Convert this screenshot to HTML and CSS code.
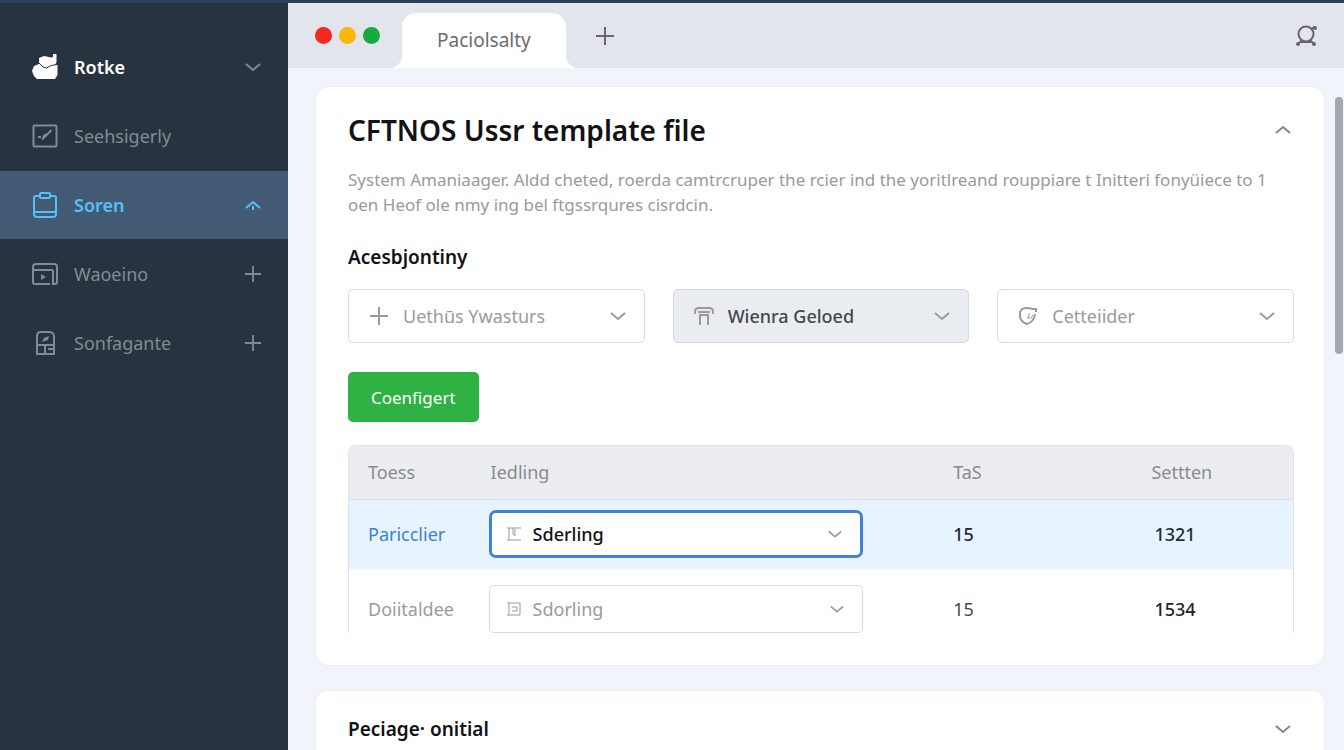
FILE: index.html
```html
<!DOCTYPE html>
<html lang="en">
<head>
<meta charset="utf-8">
<meta name="viewport" content="width=device-width, initial-scale=1">
<title>CFTNOS Ussr template file</title>
<link rel="stylesheet" href="styles.css">
</head>
<body>
<svg class="defs" aria-hidden="true">
  <symbol id="down" viewBox="0 0 18 12"><path d="M2 3l7 6 7-6"/></symbol>
  <symbol id="up" viewBox="0 0 18 12"><path d="M2 9l7-6 7 6"/></symbol>
  <symbol id="plus" viewBox="0 0 20 20"><path d="M10 1v18M1 10h18"/></symbol>
</svg>
<div class="app">
  <nav class="sidebar" aria-label="Main">
    <a class="nav-item brand" href="#">
      <svg class="nav-icon" viewBox="0 0 28 28"><path class="solid" d="M1 18L3 13L8 11V5L13 3L20 4.500L22 4V1H25.500V9L24 12H26.500V22L24 26H6L3 23Z"/><path class="cut" d="M8 10L12 14L15.500 15L20 12.500L26 11.500"/></svg>
      <span class="nav-label">Rotke</span>
      <svg class="chevron"><use href="#down"/></svg>
    </a>
    <a class="nav-item" href="#">
      <svg class="nav-icon" viewBox="0 0 28 28"><rect x="2.500" y="3.500" width="23" height="21" rx="1"/><path d="M11 17.500L20.500 8M7 15h3M12 15l3-3"/></svg>
      <span class="nav-label">Seehsigerly</span>
    </a>
    <a class="nav-item active" href="#" aria-current="page">
      <svg class="nav-icon" viewBox="0 0 28 28"><path d="M9 5H5Q3 5 3 7v16q0 3 3 3h16q3 0 3-3V7q0-2-2-2h-4M3 21h22"/><rect x="9" y="2" width="10" height="5" rx="1"/></svg>
      <span class="nav-label">Soren</span>
      <svg class="chevron"><use href="#up"/><path d="M9 7v4"/></svg>
    </a>
    <a class="nav-item" href="#">
      <svg class="nav-icon" viewBox="0 0 28 28"><path d="M19 24H4q-2 0-2-2V7q0-3 3-3h18q3 0 3 3v15q0 2-2 2h-2V10M2 10h20"/><path class="solid" d="M10 14l5 3-5 3z"/></svg>
      <span class="nav-label">Waoeino</span>
      <svg class="plus"><use href="#plus"/></svg>
    </a>
    <a class="nav-item" href="#">
      <svg class="nav-icon" viewBox="0 0 28 28"><path d="M6 25V7q0-4 4-4h8q5 0 5 5v17zM6 16h17M14 16v9M17 20h6"/><path class="solid" d="M11 13l2-4 5-2-1 4z"/></svg>
      <span class="nav-label">Sonfagante</span>
      <svg class="plus"><use href="#plus"/></svg>
    </a>
  </nav>
  <div class="window">
    <header class="tabbar">
      <div class="lights"><span class="light red"></span><span class="light yellow"></span><span class="light green"></span></div>
      <button class="tab" type="button">Paciolsalty</button>
      <button class="icon-button" type="button" aria-label="New tab"><svg class="plus"><use href="#plus"/></svg></button>
      <button class="icon-button account" type="button" aria-label="Account"><svg class="account-icon" viewBox="0 0 24 24"><circle cx="12" cy="10" r="7.500"/><path d="M17 5l4-2M8 16l-4 4M16 16l4 4M6 18h12"/><circle class="solid" cx="4" cy="20" r="2"/><circle class="solid" cx="20" cy="20" r="2"/><circle class="solid" cx="21" cy="4" r="2"/></svg></button>
    </header>
    <main class="content">
      <section class="card">
        <div class="card-head">
          <h1 class="title">CFTNOS Ussr template file</h1>
          <button class="icon-button" type="button" aria-label="Collapse"><svg class="chevron"><use href="#up"/></svg></button>
        </div>
        <p class="description">System Amaniaager. Aldd cheted, roerda camtrcruper the rcier ind the yoritlreand rouppiare t Initteri fonyüiece to 1 oen Heof ole nmy ing bel ftgssrqures cisrdcin.</p>
        <h2 class="subtitle" id="filters">Acesbjontiny</h2>
        <div class="filters" role="group" aria-labelledby="filters">
          <div class="field">
            <svg class="field-icon" viewBox="0 0 20 20"><path d="M10 1v18M1 10h18"/></svg>
            <select class="select" aria-label="First filter"><option>Uethūs Ywasturs</option></select>
            <svg class="chevron"><use href="#down"/></svg>
          </div>
          <div class="field filled">
            <svg class="field-icon" viewBox="0 0 20 20"><path d="M1 8V6q0-4 4-4h10q4 0 4 4v2M4 6h12M6 19V9h8v10"/></svg>
            <select class="select" aria-label="Second filter"><option>Wienra Geloed</option></select>
            <svg class="chevron"><use href="#down"/></svg>
          </div>
          <div class="field">
            <svg class="field-icon" viewBox="0 0 20 20"><path d="M14 3Q9 1 4 3L2 6v5q1 5 7 7 7-2 8-10M14 3h4v3"/><path class="thin" d="M11 7v3l-2 2h4l2-3"/></svg>
            <select class="select" aria-label="Third filter"><option>Cetteiider</option></select>
            <svg class="chevron"><use href="#down"/></svg>
          </div>
        </div>
        <button class="primary" type="button">Coenfigert</button>
        <div class="table-frame">
          <table class="table">
            <thead><tr><th class="col-name">Toess</th><th class="col-select">Iedling</th><th class="col-count">TaS</th><th class="col-value">Settten</th></tr></thead>
            <tbody>
              <tr class="selected">
                <td class="name">Paricclier</td>
                <td><div class="field focused">
                  <svg class="field-icon small" viewBox="0 0 16 16"><path d="M1 2h14M3 2v12M1 14h14M7 2v6l2 2V3"/></svg>
                  <select class="select" aria-label="Paricclier"><option>Sderling</option></select>
                  <svg class="chevron"><use href="#down"/></svg>
                </div></td>
                <td>15</td><td class="value">1321</td>
              </tr>
              <tr>
                <td class="name">Doiitaldee</td>
                <td><div class="field">
                  <svg class="field-icon small" viewBox="0 0 16 16"><path d="M1 2h13v12H1M3 2v12M6 6h5v4H6"/></svg>
                  <select class="select" aria-label="Doiitaldee"><option>Sdorling</option></select>
                  <svg class="chevron"><use href="#down"/></svg>
                </div></td>
                <td>15</td><td class="value">1534</td>
              </tr>
            </tbody>
          </table>
        </div>
      </section>
      <section class="card">
        <div class="card-head">
          <h2 class="subtitle">Peciage· onitial</h2>
          <button class="icon-button" type="button" aria-label="Expand"><svg class="chevron"><use href="#down"/></svg></button>
        </div>
      </section>
      <div class="scroll-thumb"></div>
    </main>
  </div>
</div>
</body>
</html>
```
FILE: styles.css
```css
* { box-sizing: border-box; }

body {
  margin: 0;
  font-family: "Noto Sans", "Open Sans", sans-serif;
  font-size: 18px;
  color: #111214;
}

h1, h2, p { margin: 0; }

button, select {
  font: inherit;
  color: inherit;
  border: 0;
  background: none;
  padding: 0;
}

svg {
  fill: none;
  stroke: currentColor;
  stroke-width: 2;
  flex: none;
}

.defs { display: none; }
.solid { fill: currentColor; stroke: none; }
.thin { stroke-width: 1; }
.chevron { width: 18px; height: 12px; }
.plus { width: 20px; height: 20px; }

.app {
  display: flex;
  height: 100vh;
  overflow: hidden;
  border-top: 3px solid #2a4059;
}

/* Sidebar */
.sidebar {
  width: 288px;
  flex: none;
  display: flex;
  flex-direction: column;
  gap: 1px;
  padding-top: 30px;
  background: #27343f;
}

.nav-item {
  display: flex;
  align-items: center;
  height: 68px;
  padding: 0 26px 0 31px;
  color: #808b95;
  text-decoration: none;
}

.nav-icon { width: 28px; height: 28px; margin-right: 15px; }
.nav-label { flex: 1; }
.nav-item .plus { width: 18px; height: 18px; }
.brand .nav-label { color: #fff; font-weight: 600; }
.brand .nav-icon { color: #fff; }
.cut { stroke: #27343f; stroke-width: 1; }

.nav-item.active {
  background: #425a74;
  color: #55c0fa;
  font-weight: 600;
}

/* Browser window */
.window {
  flex: 1;
  min-width: 0;
  display: flex;
  flex-direction: column;
  background: #f1f4fa;
}

.tabbar {
  display: flex;
  align-items: center;
  flex: none;
  height: 65px;
  padding: 0 26px 0 27px;
  background: #e2e5eb;
}

.lights { display: flex; gap: 7px; margin-right: 22px; }
.light { width: 17px; height: 17px; border-radius: 50%; }
.red { background: #f5281e; }
.yellow { background: #fdb70a; }
.green { background: #17aa40; }

.tab {
  position: relative;
  align-self: flex-end;
  height: 55px;
  padding: 0 35px 2px;
  border-radius: 14px 14px 0 0;
  background: #fff;
  color: #6c6d70;
  font-size: 19px;
}

.tab::before,
.tab::after {
  content: "";
  position: absolute;
  bottom: 0;
  width: 12px;
  height: 12px;
}

.tab::before { right: 100%; background: radial-gradient(circle at 0 0, transparent 12px, #fff 12px); }
.tab::after { left: 100%; background: radial-gradient(circle at 100% 0, transparent 12px, #fff 12px); }

.icon-button { display: flex; color: #85878a; }
.tabbar .icon-button { margin-left: 29px; color: #66686c; }
.tabbar .account { margin-left: auto; }
.account-icon { width: 24px; height: 24px; }

.content {
  position: relative;
  flex: 1;
  min-height: 0;
  display: flex;
  flex-direction: column;
  gap: 26px;
  padding: 19px 20px 0 28px;
}

.card {
  flex: none;
  padding: 24px 30px 32px 32px;
  border-radius: 12px;
  background: #fff;
  box-shadow: 0 0 3px #e4e8ef;
}

.card-head {
  display: flex;
  align-items: center;
  justify-content: space-between;
  padding-right: 2px;
}

.title { font-size: 28px; line-height: 38px; font-weight: 600; }

.description {
  margin-top: 18px;
  font-size: 17px;
  line-height: 25px;
  color: #989a9d;
}

.subtitle { font-size: 19px; line-height: 28px; font-weight: 600; }
.description + .subtitle { margin-top: 26px; }

/* Drop-downs */
.filters {
  display: grid;
  grid-template-columns: repeat(3, 1fr);
  gap: 28px;
  margin-top: 18px;
}

.field {
  display: grid;
  grid-template-columns: 54px 1fr 44px;
  align-items: center;
  height: 54px;
  border: 1px solid #d8dbdf;
  border-radius: 5px;
  background: #fff;
  color: #999b9e;
}

.field-icon {
  grid-area: 1 / 1;
  width: 20px;
  height: 20px;
  margin-left: 20px;
  pointer-events: none;
}

.field .chevron { grid-area: 1 / 3; pointer-events: none; margin-left: 9px; }

.select {
  grid-area: 1 / 1 / 2 / 4;
  width: 100%;
  height: 100%;
  padding-left: 54px;
  appearance: none;
}

.filled { background: #e9edf2; border-color: #d6dbe1; }
.filled .select { color: #44474b; font-weight: 500; }

.primary {
  display: block;
  height: 50px;
  margin-top: 29px;
  padding: 0 23px;
  border-radius: 5px;
  background: #2fb144;
  color: #fff;
  font-size: 17px;
}

/* Table */
.table-frame {
  margin-top: 23px;
  border: solid #dfe2e8;
  border-width: 1px 1px 0;
  border-radius: 8px 8px 0 0;
  overflow: hidden;
}

.table {
  width: 100%;
  table-layout: fixed;
  border-collapse: collapse;
}

.table th {
  height: 53px;
  padding: 0;
  background: #ebedf2;
  border-bottom: 1px solid #dfe2e8;
  color: #898b8f;
  font-weight: 400;
  text-align: left;
}

.table td { height: 64px; padding: 15px 0 0; color: #44474b; }
.table .name { padding-left: 19px; color: #999b9e; }
.table .col-name { width: 15%; padding-left: 19px; }
.col-select { width: 49%; }
.col-count { width: 21%; }
.col-value { width: 15%; }
.table .value { padding-left: 3px; color: #222426; font-weight: 500; }

.table .selected td { height: 70px; padding-top: 0; background: #e7f4ff; color: #202b38; font-weight: 500; }
.table .selected .name { color: #3b80d8; font-weight: 400; }

.table .field {
  grid-template-columns: 43px 1fr 36px;
  width: 81%;
  height: 48px;
  margin-left: -2px;
}

.table .field-icon { width: 16px; height: 16px; margin-left: 16px; }
.small { stroke-width: 1; }
.table .chevron { width: 16px; margin-left: 3px; }
.table .select { padding-left: 43px; }
.table .focused { border: 3px solid #3e82d9; border-radius: 7px; }
.table .focused .field-icon { margin-left: 14px; }
.table .focused .select { padding-left: 41px; color: #111214; }

/* Scroll position marker over the right gutter */
.scroll-thumb {
  position: absolute;
  top: 29px;
  right: 1px;
  width: 8px;
  height: 257px;
  border-radius: 4px;
  background: #a4a7ab;
}
```
